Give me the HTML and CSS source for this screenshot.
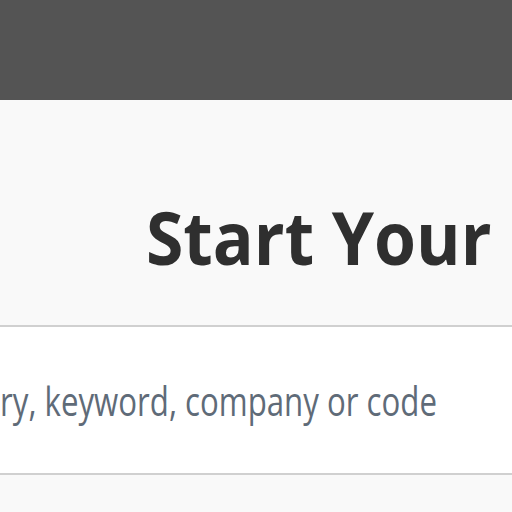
FILE: index.html
```html
<!DOCTYPE html>
<html>
<head>
<meta charset="utf-8">
<link rel="stylesheet" href="styles.css">
</head>
<body>
<header class="topbar"></header>
<section class="hero">
  <h1 class="title">Start Your Search</h1>
  <div class="search">
    <span class="placeholder">ry, keyword, company or code</span>
  </div>
</section>
</body>
</html>
```

FILE: styles.css
```css
html, body {
  margin: 0;
  padding: 0;
  overflow: hidden;
  background: #f9f9f9;
  font-family: "Open Sans", "Noto Sans", sans-serif;
}
.topbar {
  height: 100px;
  background: #545454;
}
.hero {
  background: #f9f9f9;
  padding-top: 92px;
}
.title {
  margin: 0 0 0 146px;
  font-size: 74px;
  font-weight: 700;
  line-height: 90px;
  color: #2f2f2f;
  white-space: nowrap;
  transform: scaleX(0.917);
  transform-origin: left center;
}
.search {
  margin-top: 43px;
  height: 146px;
  background: #fff;
  border-top: 2px solid #d0d0d0;
  border-bottom: 2px solid #d0d0d0;
  display: flex;
  align-items: center;
  white-space: nowrap;
}
.placeholder {
  display: inline-block;
  font-size: 40px;
  color: #5f6b78;
  transform: scaleX(0.78);
  transform-origin: left center;
}
```
